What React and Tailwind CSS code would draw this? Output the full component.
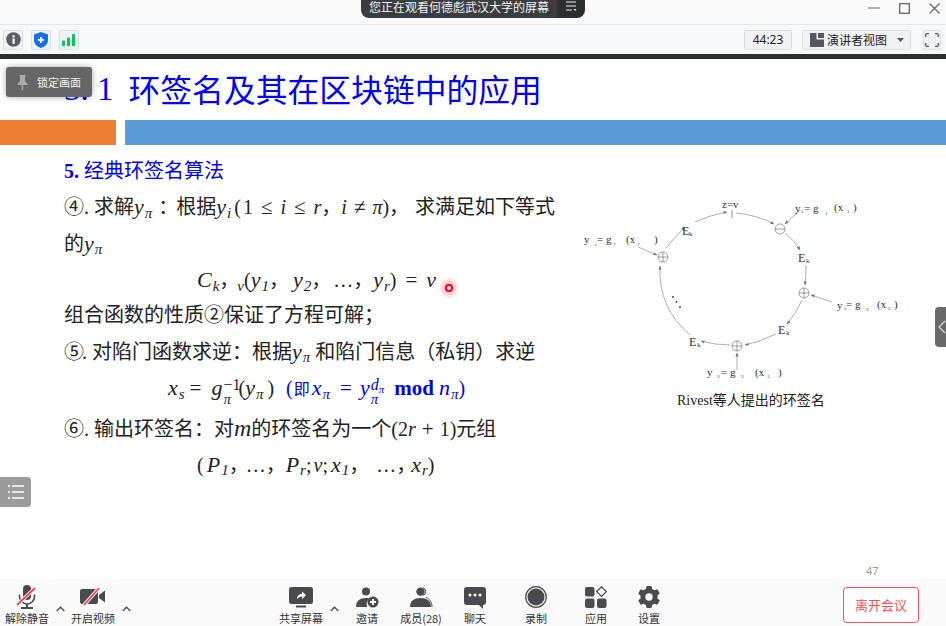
import React from "react";

const serif = "font-['Liberation_Serif','Noto_Sans_CJK_SC',serif]";

const Y = ({ s, c = "y", className = "" }) => (
  <span className={`italic text-[22px] ${className}`}>
    {c}
    <sub className="text-[15px] ml-[1px]"><i>{s}</i></sub>
  </span>
);

const Stack = ({ top, bottom, className = "" }) => (
  <span className={`inline-flex flex-col align-middle leading-none italic text-[16px] ml-[1px] ${className}`}>
    <span className="not-italic h-[15px]">{top}</span>
    <span className="h-[12px] text-[15px]">{bottom}</span>
  </span>
);

const Op = ({ children, className = "mx-[5px]" }) => (
  <span className={`text-[21px] ${className}`}>{children}</span>
);

const Line = ({ className = "", children }) => (
  <div className={`flex items-center whitespace-pre ${className}`}>
    <span>{children}</span>
  </div>
);

const Mic = () => (
  <svg width="24" height="24" viewBox="0 0 24 24">
    <rect x="8" y="0" width="8" height="15" rx="4" fill="#4a4a50" />
    <path d="M4.500 9.500v2a7.500 7.500 0 0 0 15 0v-2" fill="none" stroke="#4a4a50" strokeWidth="1.600" />
    <path d="M12 19v3M6 23h12" stroke="#4a4a50" strokeWidth="2" />
    <path d="M2 20L20 3" stroke="#fff" strokeWidth="3.500" />
    <path d="M2 20L20 3" stroke="#f0444c" strokeWidth="1.800" />
  </svg>
);
const Cam = () => (
  <svg width="26" height="18" viewBox="0 0 26 18">
    <rect x="0" y="1" width="18" height="15" rx="2" fill="#4a4a50" />
    <path d="M19 7l6-4.500v12L19 10z" fill="#4a4a50" />
    <path d="M4 17L19 0" stroke="#fff" strokeWidth="3.500" />
    <path d="M4 17L19 0" stroke="#f0444c" strokeWidth="1.800" />
  </svg>
);
const Share = () => (
  <svg width="24" height="21" viewBox="0 0 24 21">
    <rect x="0" y="0" width="24" height="17" rx="2.500" fill="#4a4a50" />
    <rect x="7" y="18.500" width="10" height="2" fill="#4a4a50" />
    <path d="M8 12c0-3 2-5 5-5V4.500l4 3.700-4 3.700V9.500c-2 0-3.500.8-5 2.500z" fill="#fff" />
  </svg>
);
const Invite = () => (
  <svg width="23" height="21" viewBox="0 0 23 21">
    <circle cx="10" cy="4.500" r="4" fill="#4a4a50" />
    <path d="M0 20c0-6 4-9 10-9 2 0 3 .3 4 .8A7 7 0 0 0 11 20z" fill="#4a4a50" />
    <circle cx="17" cy="15" r="5.500" fill="#4a4a50" />
    <path d="M17 12v6M14 15h6" stroke="#fff" strokeWidth="1.800" />
  </svg>
);
const Members = () => (
  <svg width="23" height="21" viewBox="0 0 23 21">
    <path d="M13 .6a4.300 4.300 0 0 1 0 8" fill="none" stroke="#4a4a50" strokeWidth="1" />
    <circle cx="10.500" cy="4.600" r="4.200" fill="#4a4a50" />
    <path d="M0 20c0-6 4-9 10.500-9S21 14 21 20z" fill="#4a4a50" />
    <path d="M16 10.500c4 1.500 6 5 6 9.500" fill="none" stroke="#4a4a50" strokeWidth="1" />
  </svg>
);
const Chat = () => (
  <svg width="22" height="24" viewBox="0 0 22 24">
    <path d="M3 2h16a3 3 0 0 1 3 3v12a3 3 0 0 1-3 3v4l-4-4H3a3 3 0 0 1-3-3V5a3 3 0 0 1 3-3z" fill="#4a4a50" />
    <circle cx="6" cy="10" r="1.500" fill="#fff" />
    <circle cx="11" cy="10" r="1.500" fill="#fff" />
    <circle cx="16" cy="10" r="1.500" fill="#fff" />
  </svg>
);
const Rec = () => (
  <svg width="22" height="22" viewBox="0 0 22 22">
    <circle cx="11" cy="11" r="10.300" fill="none" stroke="#4a4a50" strokeWidth="1.200" />
    <circle cx="11" cy="11" r="8.500" fill="#4a4a50" />
  </svg>
);
const Apps = () => (
  <svg width="22" height="22" viewBox="0 0 22 22">
    <rect x="0" y="1" width="9.500" height="9.500" rx="2" fill="#4a4a50" />
    <rect x="0" y="12.500" width="9.500" height="9.500" rx="2" fill="#4a4a50" />
    <rect x="12" y="12.500" width="9.500" height="9.500" rx="2" fill="#4a4a50" />
    <path d="M16.500 0.800l4.800 4.800-4.800 4.800-4.800-4.800z" fill="none" stroke="#4a4a50" strokeWidth="1.300" />
  </svg>
);
const Gear = () => (
  <svg width="22" height="22" viewBox="0 0 22 22">
    <path
      d="M8.500 0h5l.6 3 2.300 1.300 2.900-1 2.500 4.300-2.300 2v2.800l2.300 2-2.500 4.300-2.900-1L14.100 19l-.6 3h-5l-.6-3-2.300-1.300-2.900 1L.2 14.400l2.300-2V9.600l-2.300-2 2.500-4.300 2.900 1L7.900 3z"
      fill="#4a4a50"
    />
    <circle cx="11" cy="11" r="3.700" fill="#fafafa" />
  </svg>
);
const Caret = () => (
  <div className="w-[12px] h-[30px] flex items-end justify-center">
    <svg width="9" height="6" viewBox="0 0 9 6" className="mb-[2px]">
      <path d="M.7 5L4.500 1.200 8.300 5" fill="none" stroke="#4a4a50" strokeWidth="1.400" />
    </svg>
  </div>
);
const Tool = ({ label, icon, className = "" }) => (
  <div className={`w-[54px] shrink-0 flex flex-col items-center ${className}`}>
    <div className="h-[26px] flex items-center justify-center">{icon}</div>
    <div className="text-[11px] leading-[16px] text-[#333] whitespace-nowrap">{label}</div>
  </div>
);

const Box = ({ className = "", children }) => (
  <div className={`h-[20px] border border-[#dcdee2] bg-[#f1f2f4] rounded-[2px] flex items-center justify-center ${className}`}>
    {children}
  </div>
);

const Node = ({ x, y, plus = true }) => (
  <g fill="none" stroke="#777" strokeWidth=".7">
    <circle cx={x} cy={y} r="5" fill="#fff" />
    <path d={`M${x - 5} ${y}H${x + 5}`} />
    {plus && <path d={`M${x} ${y - 5}V${y + 5}`} />}
  </g>
);

const L = ({ x, y, s = 11, children }) => (
  <text x={x} y={y} fontSize={s} fill="#333" fontFamily="Liberation Serif">{children}</text>
);

const Diagram = () => (
  <svg width="330" height="195" viewBox="0 0 330 195" className="block">
    <defs>
      <marker id="a" markerWidth="5" markerHeight="5" refX="4.500" refY="2.500" orient="auto">
        <path d="M0 .5L5 2.500 0 4.500z" fill="#777" />
      </marker>
    </defs>
    <g fill="none" stroke="#999" strokeWidth=".8">
      <path d="M166 23Q187 25 204 34" markerEnd="url(#a)" />
      <path d="M216 44Q224 50 230 60" markerEnd="url(#a)" />
      <path d="M236 75Q236 85 235 95" markerEnd="url(#a)" />
      <path d="M232 110Q226 124 217 134" markerEnd="url(#a)" />
      <path d="M206 144Q190 152 175 155" markerEnd="url(#a)" />
      <path d="M160 155Q145 155 131 151" markerEnd="url(#a)" />
      <path d="M120 145Q88 118 90 76" markerEnd="url(#a)" />
      <path d="M96 58Q104 48 115 37" markerEnd="url(#a)" />
      <path d="M125 32Q140 25 157 22" markerEnd="url(#a)" />
      <path d="M230 20L215 34" markerEnd="url(#a)" />
      <path d="M262 112L241 105" markerEnd="url(#a)" />
      <path d="M167 180V163" markerEnd="url(#a)" />
      <path d="M68 57L87 65" markerEnd="url(#a)" />
    </g>
    <path d="M162 20V28" stroke="#777" strokeWidth=".8" />
    <Node x={210} y={39} plus={false} />
    <Node x={234} y={103} />
    <Node x={167} y={156} />
    <Node x={93} y={67} />
    <L x={152} y={18}>z=v</L>
    <L x={225} y={22}>y</L>
    <L x={231} y={23} s={5}>1</L>
    <L x={234} y={22}>= g</L>
    <L x={255} y={25} s={5}>1</L>
    <L x={264} y={21}>(x</L>
    <L x={277} y={23} s={5}>1</L>
    <L x={283} y={21}>)</L>
    <L x={14} y={53}>y</L>
    <L x={25} y={56} s={5}>r</L>
    <L x={27} y={53}>= g</L>
    <L x={44} y={55} s={5}>r</L>
    <L x={56} y={53}>(x</L>
    <L x={68} y={55} s={5}>r</L>
    <L x={84} y={53}>)</L>
    <L x={112} y={45} s={12}>E</L>
    <L x={119} y={46} s={7}>k</L>
    <L x={228} y={72} s={12}>E</L>
    <L x={236} y={73} s={7}>k</L>
    <L x={208} y={144} s={12}>E</L>
    <L x={216} y={145} s={7}>k</L>
    <L x={119} y={156} s={12}>E</L>
    <L x={127} y={157} s={7}>k</L>
    <L x={267} y={119}>y</L>
    <L x={274} y={120} s={5}>2</L>
    <L x={276} y={118}>= g</L>
    <L x={296} y={121} s={5}>2</L>
    <L x={307} y={118}>(x</L>
    <L x={318} y={120} s={5}>2</L>
    <L x={324} y={118}>)</L>
    <L x={137} y={186}>y</L>
    <L x={147} y={188} s={5}>3</L>
    <L x={151} y={186}>= g</L>
    <L x={171} y={188} s={5}>3</L>
    <L x={185} y={186}>(x</L>
    <L x={197} y={188} s={5}>3</L>
    <L x={208} y={186}>)</L>
    <circle cx="103" cy="107" r=".9" fill="#333" />
    <circle cx="106.500" cy="112" r=".9" fill="#333" />
    <circle cx="110" cy="117" r=".9" fill="#333" />
  </svg>
);

export default function App() {
  return (
    <div className="relative w-[946px] h-[626px] overflow-hidden bg-white flex flex-col font-['Noto_Sans_CJK_SC','Noto_Sans',sans-serif]">
      {/* window title bar */}
      <div className="h-[25px] shrink-0 bg-[#fafafa] border-b border-[#e6e6e6] flex items-center justify-end pr-[3px] gap-[19px]">
        <svg width="12" height="12" viewBox="0 0 12 12" className="-mt-[8px]"><path d="M0 6h12" stroke="#888" strokeWidth="1.300" /></svg>
        <svg width="11" height="11" viewBox="0 0 11 11" className="-mt-[8px]"><rect x=".7" y=".7" width="9.600" height="9.600" fill="none" stroke="#666" strokeWidth="1.300" /></svg>
        <svg width="11" height="11" viewBox="0 0 11 11" className="-mt-[8px] mr-[3px]"><path d="M.5.500l10 10M10.500.500l-10 10" stroke="#666" strokeWidth="1.200" /></svg>
      </div>

      {/* info toolbar */}
      <div className="h-[29px] shrink-0 bg-[#f7f8fa] flex items-center pl-[3px] pr-[5px]">
        <Box className="w-[20px]">
          <svg width="15" height="15" viewBox="0 0 15 15">
            <circle cx="7.500" cy="7.500" r="7.300" fill="#5a5d63" />
            <rect x="6.500" y="6.500" width="2.200" height="5.300" fill="#fff" />
            <rect x="6.500" y="3.300" width="2.200" height="2.200" fill="#fff" />
          </svg>
        </Box>
        <Box className="w-[20px] ml-[8px]">
          <svg width="14" height="16" viewBox="0 0 14 16">
            <path d="M7 0l7 2.500v5.500c0 4-3 6.700-7 8-4-1.300-7-4-7-8V2.500z" fill="#0e71eb" />
            <path d="M7 5v6M4 8h6" stroke="#fff" strokeWidth="2" />
          </svg>
        </Box>
        <Box className="w-[20px] ml-[8px]">
          <svg width="14" height="12" viewBox="0 0 14 12">
            <rect x="0" y="6.500" width="3" height="5.500" rx=".5" fill="#0bc65c" />
            <rect x="5" y="3.500" width="3" height="8.500" rx=".5" fill="#0bc65c" />
            <rect x="10" y="0" width="3" height="12" rx=".5" fill="#0bc65c" />
          </svg>
        </Box>
        <div className="flex-1" />
        <Box className="w-[48px] text-[12px] text-[#222] font-['Noto_Sans',sans-serif] border-[#d2d4d8]">44:23</Box>
        <Box className="w-[109px] ml-[10px] justify-start pl-[7px]">
          <svg width="14" height="14" viewBox="0 0 14 14" className="shrink-0">
            <path d="M0 0h6.500v6.500H14V14H0z" fill="#55585e" />
            <rect x="8" y="0" width="6" height="5" fill="#55585e" />
          </svg>
          <span className="ml-[3px] text-[12px] text-[#222] whitespace-nowrap">演讲者视图</span>
          <svg width="7" height="4" viewBox="0 0 7 4" className="ml-[10px]"><path d="M0 0h7L3.500 4z" fill="#555" /></svg>
        </Box>
        <Box className="w-[18px] ml-[12px]">
          <svg width="14" height="14" viewBox="0 0 14 14">
            <path d="M.7 4V1.700a1 1 0 0 1 1-1H4M10 .7h2.300a1 1 0 0 1 1 1V4M13.300 10v2.300a1 1 0 0 1-1 1H10M4 13.300H1.700a1 1 0 0 1-1-1V10" fill="none" stroke="#55585e" strokeWidth="1.300" />
          </svg>
        </Box>
      </div>
      <div className="h-[5px] shrink-0 bg-[#2e2e2e]" />

      {/* slide */}
      <div className={`flex-1 min-h-0 flex flex-col bg-white ${serif}`}>
        <div className="h-[61px] shrink-0 flex items-center pl-[64px] pb-[1px] text-[33px] text-[#0000f0] whitespace-pre leading-none">
          <span className="font-['Liberation_Serif',serif]">3. 1</span>
          <span className="ml-[15px] font-['Noto_Sans_CJK_SC',sans-serif] text-[31.8px]">环签名及其在区块链中的应用</span>
        </div>
        <div className="h-[25px] shrink-0 flex gap-[9px]">
          <div className="w-[116px] bg-[#ed7d31]" />
          <div className="flex-1 bg-[#5b9bd5]" />
        </div>
        <div className="flex-1 min-h-0 flex text-[20px] text-[#222]">
          <div className="w-[570px] shrink-0 pt-[8px]">
            <Line className="h-[36px] pl-[64px] text-[#0000e6]"><b className="font-['Liberation_Serif',serif]">5. </b>经典环签名算法</Line>
            <Line className="h-[35px] pl-[64px]">④. 求解<Y s="π" /><span className="mx-[6px]">：</span><span className="-ml-[8px]">根据</span><Y s="i" /><span className="ml-[3px]">(</span><span className="ml-[2px]">1</span><Op className="mx-[8px]">≤</Op><i>i</i><Op className="mx-[8px]">≤</Op><i>r</i>，<i>i</i><Op className="mx-[7px]">≠</Op><i>π</i>)，<span className="ml-[6px]">求满足如下等式</span></Line>
            <Line className="h-[38px] pl-[64px]">的<Y s="π" /></Line>
            <Line className="h-[36px] pl-[197px]"><Y c="C" s="k" />，<sub className="text-[15px] -ml-[2px]"><i>v</i></sub>(<Y s="1" />，<span className="ml-[4px]"><Y s="2" /></span>，<span className="ml-[2px]">…</span>，<Y s="r" />)<Op className="mx-[9px]">=</Op><i className="text-[22px]">v</i></Line>
            <Line className="h-[34px] pl-[64px]">组合函数的性质②保证了方程可解；</Line>
            <Line className="h-[38px] pl-[64px]"><span className="-mr-[2px]">⑤</span>. 对陷门函数求逆：根据<Y s="π" /> 和陷门信息（私钥）求逆</Line>
            <Line className="h-[40px] pl-[168px] pb-[4px]">
              <Y c="x" s="s" /><Op className="ml-[5px] mr-[10px]">=</Op><span className="italic text-[22px]">g</span><Stack top="−1" bottom="π" className="-mr-[2px]" />(<Y s="π" className="mr-[4px]" />)<span className="ml-[12px] text-[#0000e6]">(<span className="text-[16px] ml-[1px] mr-[2px]">即</span><Y c="x" s="π" className="mr-[5px]" /><Op>=</Op><span className="italic text-[22px] ml-[3px]">y</span><Stack top={<i>d<sub className="text-[11px]">π</sub></i>} bottom="π" className="mr-[5px]" /> <b className="text-[21px]">mod</b> <Y c="n" s="π" />)</span>
            </Line>
            <Line className="h-[35px] pl-[64px]">⑥. 输出环签名：对<i className="text-[24px]">m</i>的环签名为一个(2<i>r</i><Op className="mx-[6px]">+</Op>1)元组</Line>
            <Line className="h-[38px] pl-[197px]">(<Y c="P" s="1" className="ml-[3px]" />，<span className="-ml-[3px]">…</span>，<Y c="P" s="r" />;<span className="ml-[2px]"><i>v</i></span>;<span className="ml-[3px]"><Y c="x" s="1" /></span>，<span className="ml-[7px]">…</span>，<span className="-ml-[5px]"><Y c="x" s="r" /></span>)</Line>
          </div>
          <div className="flex-1 pt-[45px] flex flex-col">
            <Diagram />
            <div className="mt-[6px] ml-[107px] text-[14px] leading-[20px] text-[#222] whitespace-nowrap">Rivest等人提出的环签名</div>
          </div>
        </div>
      </div>

      {/* meeting toolbar */}
      <div className="h-[47px] shrink-0 bg-[#fafafa] flex items-start pt-[5px] relative">
        <Tool label="解除静音" icon={<Mic />} />
        <Caret />
        <Tool label="开启视频" icon={<Cam />} />
        <Caret />
        <div className="w-[142px] shrink-0" />
        <Tool label="共享屏幕" icon={<Share />} />
        <Caret />
        <Tool label="邀请" icon={<Invite />} />
        <Tool label="成员(28)" icon={<Members />} />
        <Tool label="聊天" icon={<Chat />} />
        <Tool label="录制" icon={<Rec />} className="ml-[7px]" />
        <Tool label="应用" icon={<Apps />} className="ml-[6px]" />
        <Tool label="设置" icon={<Gear />} className="-ml-[1px]" />
        <div className="ml-[167px] mt-[3px] w-[76px] h-[36px] border border-[#f0545c] rounded-[4px] bg-white flex items-center justify-center text-[13px] text-[#f0545c]">离开会议</div>
      </div>

      {/* overlays */}
      <div className="absolute left-[361px] top-0 w-[224px] h-[18px] rounded-b-[8px] flex overflow-hidden text-[12px] leading-[14px] text-[#f2f2f2]">
        <div className="w-[196px] bg-[#3a3d40] pl-[8px] whitespace-nowrap">您正在观看何德彪武汉大学的屏幕</div>
        <div className="flex-1 bg-[#2c2e31] flex items-start justify-center pt-[1px]">
          <svg width="12" height="11" viewBox="0 0 12 11"><path d="M1 1h10M1 5h10M1 9h6" stroke="#eee" strokeWidth="1" /><path d="M8.500 8h3l-1.500 2z" fill="#eee" /></svg>
        </div>
      </div>
      <div className="absolute left-[6px] top-[67px] w-[86px] h-[30px] rounded-[3px] bg-[#666] shadow-[0_0_6px_rgba(0,0,0,0.35)] flex items-center pl-[11px] text-[11px] text-[#f4f4f4] whitespace-nowrap">
        <svg width="11" height="15" viewBox="0 0 11 15" className="mr-[9px]">
          <path d="M2.500 0h6v1.500L8 2v4l2.500 3v1H6.200v5h-1.400v-5H.5V9L3 6V2l-.5-.5z" fill="#a8a8a8" />
        </svg>
        锁定画面
      </div>
      <div className="absolute left-0 top-[477px] w-[31px] h-[30px] rounded-r-[4px] bg-[#9b9b9b] flex items-center justify-center">
        <svg width="16" height="14" viewBox="0 0 16 14"><path d="M4 1h12M4 7h12M4 13h12M0 1h2M0 7h2M0 13h2" stroke="#fff" strokeWidth="1.300" /></svg>
      </div>
      <div className="absolute left-[935px] top-[307px] w-[11px] h-[40px] rounded-l-[4px] bg-[#6a6a6a] flex items-center">
        <svg width="8" height="14" viewBox="0 0 8 14" className="ml-[3px]"><path d="M7 1L1 7l6 6" fill="none" stroke="#ddd" strokeWidth="1.200" /></svg>
      </div>
      <div className="absolute left-[866px] top-[564px] text-[11px] leading-[14px] text-[#9a9a9a] font-['Noto_Sans',sans-serif]">47</div>
      <div className="absolute left-[445px] top-[284px] w-[8px] h-[8px] rounded-full bg-white border-2 border-[#f0001a] shadow-[0_0_5px_3px_rgba(255,0,30,0.35)]" />
    </div>
  );
}
